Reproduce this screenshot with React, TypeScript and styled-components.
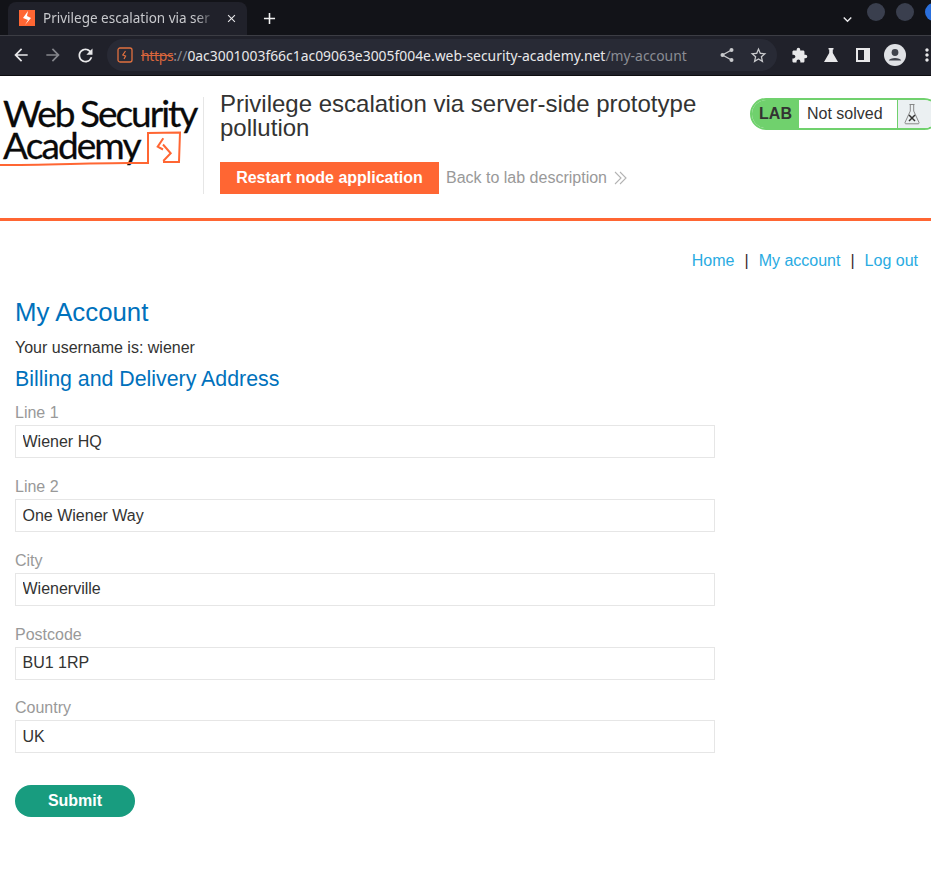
import React from "react";
import styled, { createGlobalStyle } from "styled-components";
import { MdArrowBack, MdArrowForward, MdRefresh, MdOutlineStarBorder, MdExtension, MdClose, MdAdd, MdKeyboardArrowDown, MdMoreVert } from "react-icons/md";

const GlobalStyle = createGlobalStyle`
  html, body {
    margin: 0;
    padding: 0;
    background: #fff;
    overflow: hidden;
  }
  body {
    font-family: "Liberation Sans", Arial, sans-serif;
    color: #333332;
  }
  * { box-sizing: border-box; }
`;

const Page = styled.div`
  width: 931px;
  height: 877px;
  overflow: hidden;
`;

/* browser chrome */
const TabStrip = styled.div`
  height: 35px;
  background: #121318;
  display: flex;
  align-items: flex-end;
  padding-left: 8px;
`;

const Tab = styled.div`
  width: 239px;
  height: 33px;
  background: #20212a;
  border-radius: 8px 8px 0 0;
  display: flex;
  align-items: center;
  padding: 0 9px 1px 11px;
  gap: 8px;
  color: #c8c9cd;
  font-family: "Noto Sans", sans-serif;
  font-size: 13.5px;
`;

const TabTitle = styled.span`
  flex: 1;
  white-space: nowrap;
  -webkit-mask-image: linear-gradient(to right, #000 88%, transparent 99%);
  mask-image: linear-gradient(to right, #000 88%, transparent 99%);
`;

const NewTab = styled.div`
  color: #f2f2f2;
  display: flex;
  margin-left: 13px;
  height: 33px;
  align-items: center;
`;

const WindowControls = styled.div`
  margin-left: auto;
  height: 35px;
  display: flex;
  align-items: flex-start;
  gap: 11px;
  padding-top: 3px;
  margin-right: -12px;
`;

const WindowDot = styled.span<{ $blue?: boolean }>`
  width: 18px;
  height: 18px;
  border-radius: 50%;
  background: ${(p) => (p.$blue ? "#2a6fdc" : "#3a3f4e")};
`;

const Toolbar = styled.div`
  height: 41px;
  background: #20212a;
  border-top: 1px solid #3c3d44;
  border-bottom: 1px solid #0d0d10;
  display: flex;
  align-items: center;
  padding: 0 0 1px 11px;
  color: #e8e8ea;
`;

const NavIcon = styled.span<{ $dim?: boolean }>`
  display: flex;
  width: 32px;
  flex-shrink: 0;
  color: ${(p) => (p.$dim ? "#85868c" : "#e8e8ea")};
`;

const Omnibox = styled.div`
  width: 670px;
  height: 32px;
  flex-shrink: 0;
  background: #282a35;
  border-radius: 16px;
  display: flex;
  align-items: center;
  padding-left: 10px;
  font-family: "Noto Sans", sans-serif;
  font-size: 13.9px;
  white-space: nowrap;
`;

const Https = styled.span`
  color: #d9663c;
  text-decoration: line-through;
  letter-spacing: -0.3px;
`;

const Slashes = styled.span`
  color: #8b8d94;
`;

const Host = styled.span`
  color: #e8e8ea;
`;

const UrlPath = styled.span`
  color: #8b8d94;
`;

const OmniActions = styled.div`
  margin-left: auto;
  display: flex;
  align-items: center;
  gap: 14px;
  padding-right: 9px;
  color: #c9cacd;
`;

const ToolIcons = styled.div`
  display: flex;
  align-items: center;
  margin-left: 6px;
  color: #e8e8ea;
  flex-shrink: 0;
`;

const ToolButton = styled.span`
  width: 32px;
  display: flex;
  justify-content: center;
`;

/* lab header */
const LabHeader = styled.header`
  height: 145px;
  border-bottom: 3px solid #ff6633;
  display: flex;
  align-items: flex-start;
  padding: 21px 0 0 3px;
`;

const LogoBlock = styled.div`
  width: 201px;
  height: 97px;
  flex-shrink: 0;
  border-right: 1px solid #e6e6e6;
`;

const LabMain = styled.div`
  width: 546px;
  flex-shrink: 0;
  padding: 0 30px 0 16px;
  margin-top: -5px;
`;

const LabTitle = styled.h2`
  margin: 0;
  font-weight: 400;
  font-size: 24px;
  line-height: 24px;
  color: #333332;
`;

const LabActions = styled.div`
  display: flex;
  align-items: center;
  margin-top: 22px;
  gap: 7px;
`;

const RestartButton = styled.a`
  background: #ff6633;
  color: #fff;
  font-weight: 700;
  font-size: 16px;
  height: 32px;
  width: 219px;
  display: flex;
  align-items: center;
  justify-content: center;
`;

const BackLink = styled.a`
  color: #999;
  font-size: 16px;
  display: flex;
  align-items: center;
  gap: 7px;
`;

const LabBadge = styled.div`
  display: flex;
  width: 190px;
  height: 32px;
  flex-shrink: 0;
  border: 2px solid #70d16d;
  border-radius: 16px;
  overflow: hidden;
  margin-top: 1px;
`;

const BadgeLabel = styled.span`
  background: #70d16d;
  width: 47px;
  display: flex;
  align-items: center;
  justify-content: center;
  font-weight: 700;
  font-size: 16px;
  color: #333332;
`;

const BadgeStatus = styled.span`
  width: 98px;
  padding-left: 8px;
  display: flex;
  align-items: center;
  font-size: 16px;
  color: #333332;
  background: #fff;
`;

const BadgeIcon = styled.span`
  flex: 1;
  border-left: 1px solid #70d16d;
  background: #ebf0f2;
  padding-left: 6px;
  display: flex;
  align-items: center;
`;

/* page content */
const Content = styled.main`
  padding: 0 15px;
`;

const TopLinks = styled.nav`
  display: flex;
  justify-content: flex-end;
  align-items: center;
  gap: 10px;
  font-size: 16px;
  height: 18px;
  margin: 31px -2px 0 0;
`;

const TopLink = styled.a`
  color: #29abe2;
`;

const Divider = styled.span`
  color: #3a2a2a;
`;

const Heading = styled.h1`
  margin: 27px 0 0;
  font-size: 25.8px;
  line-height: 30px;
  font-weight: 400;
  color: #0071bc;
`;

const Username = styled.p`
  margin: 12px 0 0;
  font-size: 16px;
  line-height: 18px;
`;

const SubHeading = styled.h2`
  margin: 10px 0 0;
  font-size: 21.33px;
  line-height: 25px;
  font-weight: 400;
  color: #0071bc;
`;

const AddressForm = styled.form`
  display: flex;
  flex-direction: column;
  margin-top: 12.3px;
`;

const Field = styled.label`
  display: flex;
  flex-direction: column;
  height: 73.75px;
  font-size: 16px;
  color: #999;
`;

const FieldName = styled.span`
  line-height: 18px;
  height: 21px;
`;

const TextInput = styled.input`
  width: 700px;
  height: 33px;
  border: 1px solid #e6e6e6;
  padding: 0 6.5px;
  font: 16px "Liberation Sans", Arial, sans-serif;
  color: #333332;
  background: #fff;
  outline: none;
`;

const SubmitButton = styled.button`
  width: 120px;
  height: 32px;
  margin-top: 12px;
  border: 0;
  border-radius: 16px;
  background: #189c7f;
  color: #fff;
  font: 700 16px "Liberation Sans", Arial, sans-serif;
`;

const LogoMark = () => (
  <svg width="200" height="78" viewBox="0 0 200 78" style={{ display: "block", overflow: "visible" }}>
    <text x="0" y="30" fontFamily="Lato, sans-serif" fontSize="37" fill="#0a0a0a" stroke="#0a0a0a" strokeWidth="0.3" letterSpacing="-2" wordSpacing="-1">
      Web Security
    </text>
    <text x="0" y="62" fontFamily="Lato, sans-serif" fontSize="37" fill="#0a0a0a" stroke="#0a0a0a" strokeWidth="0.3" letterSpacing="-1.9">
      Academy
    </text>
    <path d="M-3 68 C40 68 90 66 125 66 L145 66 L145 36 L177 35.5 L176 65 L160 65" fill="none" stroke="#ff6633" strokeWidth="2" />
    <path d="M160.3 41.3 L154.7 49.7 L160 52.5 M160 47.5 L167.7 56.3 L160.3 64" fill="none" stroke="#ff6633" strokeWidth="2" />
  </svg>
);

const fields = [
  { name: "Line 1", value: "Wiener HQ" },
  { name: "Line 2", value: "One Wiener Way" },
  { name: "City", value: "Wienerville" },
  { name: "Postcode", value: "BU1 1RP" },
  { name: "Country", value: "UK" },
];

function App() {
  return (
    <Page>
      <GlobalStyle />
      <TabStrip>
        <Tab>
          <svg width="16" height="16" viewBox="0 0 16 16">
            <rect width="16" height="16" fill="#ff6633" />
            <path d="M9 1 L4 8 L9 10 L6 15 L12 8 L8 6 Z" fill="#fff" />
          </svg>
          <TabTitle>Privilege escalation via ser</TabTitle>
          <MdClose size={13} color="#e8e8ea" />
        </Tab>
        <NewTab>
          <MdAdd size={19} />
        </NewTab>
        <WindowControls>
          <MdKeyboardArrowDown size={17} color="#e8e8ea" style={{ marginTop: 8 }} />
          <WindowDot />
          <WindowDot />
          <WindowDot $blue />
        </WindowControls>
      </TabStrip>
      <Toolbar>
        <NavIcon><MdArrowBack size={20} /></NavIcon>
        <NavIcon $dim><MdArrowForward size={20} /></NavIcon>
        <NavIcon><MdRefresh size={21} /></NavIcon>
        <Omnibox>
          <svg width="16" height="16" viewBox="0 0 16 16" style={{ marginRight: 8, flexShrink: 0 }}>
            <rect x="1" y="1" width="14" height="14" rx="2" fill="none" stroke="#e0703f" strokeWidth="1.3" />
            <path d="M8.5 4 L5.8 8 L8.6 9 L7 12" fill="none" stroke="#e0703f" strokeWidth="1.2" />
          </svg>
          <Https>https</Https>
          <Slashes>://</Slashes>
          <Host>0ac3001003f66c1ac09063e3005f004e.web-security-academy.net</Host>
          <UrlPath>/my-account</UrlPath>
          <OmniActions>
            <svg width="16" height="16" viewBox="0 0 16 16">
              <path d="M12.5 3 L3.5 8 L12.5 13" fill="none" stroke="currentColor" strokeWidth="1.3" />
              <circle cx="12.5" cy="3" r="2" fill="currentColor" />
              <circle cx="3.5" cy="8" r="2" fill="currentColor" />
              <circle cx="12.5" cy="13" r="2" fill="currentColor" />
            </svg>
            <MdOutlineStarBorder size={19} />
          </OmniActions>
        </Omnibox>
        <ToolIcons>
          <ToolButton><MdExtension size={17} /></ToolButton>
          <ToolButton>
            <svg width="16" height="16" viewBox="0 0 16 16">
              <path d="M5.5 1 H10.5 V2.5 H9.8 V6 L15 15 H1 L6.2 6 V2.5 H5.5 Z" fill="currentColor" />
            </svg>
          </ToolButton>
          <ToolButton>
            <svg width="16" height="16" viewBox="0 0 16 16">
              <rect x="2" y="2" width="12" height="12" fill="none" stroke="currentColor" strokeWidth="2" />
              <rect x="9" y="2" width="5" height="12" fill="currentColor" />
            </svg>
          </ToolButton>
          <ToolButton>
            <svg width="22" height="22" viewBox="0 0 22 22">
              <circle cx="11" cy="11" r="11" fill="#dfe1e5" />
              <circle cx="11" cy="8.5" r="3.4" fill="#40434c" />
              <path d="M4.8 16.5 C5.5 13 16.5 13 17.2 16.5 Z" fill="#40434c" />
            </svg>
          </ToolButton>
          <ToolButton><MdMoreVert size={20} /></ToolButton>
        </ToolIcons>
      </Toolbar>

      <LabHeader>
        <LogoBlock>
          <LogoMark />
        </LogoBlock>
        <LabMain>
          <LabTitle>Privilege escalation via server-side prototype pollution</LabTitle>
          <LabActions>
            <RestartButton>Restart node application</RestartButton>
            <BackLink>
              Back to lab description
              <svg width="13" height="14" viewBox="0 0 13 14">
                <path d="M1 1 L7 7 L1 13 M6 1 L12 7 L6 13" fill="none" stroke="#b3b3b3" strokeWidth="1.1" />
              </svg>
            </BackLink>
          </LabActions>
        </LabMain>
        <LabBadge>
          <BadgeLabel>LAB</BadgeLabel>
          <BadgeStatus>Not solved</BadgeStatus>
          <BadgeIcon>
            <svg width="16" height="22" viewBox="0 0 16 22">
              <path d="M5.5 1.5 H10.5 M6.3 1.5 V8 L1 19.5 C0.8 20.3 1.2 20.8 2 20.8 H14 C14.8 20.8 15.2 20.3 15 19.5 L9.7 8 V1.5" fill="none" stroke="#7d7d7d" strokeWidth="0.9" />
              <path d="M5 12 L11 18 M11 12 L5 18" stroke="#333332" strokeWidth="1.5" />
            </svg>
          </BadgeIcon>
        </LabBadge>
      </LabHeader>

      <Content>
        <TopLinks>
          <TopLink>Home</TopLink>
          <Divider>|</Divider>
          <TopLink>My account</TopLink>
          <Divider>|</Divider>
          <TopLink>Log out</TopLink>
        </TopLinks>
        <Heading>My Account</Heading>
        <Username>Your username is: wiener</Username>
        <SubHeading>Billing and Delivery Address</SubHeading>
        <AddressForm onSubmit={(e) => e.preventDefault()}>
          {fields.map((f) => (
            <Field key={f.name}>
              <FieldName>{f.name}</FieldName>
              <TextInput defaultValue={f.value} />
            </Field>
          ))}
          <SubmitButton type="submit">Submit</SubmitButton>
        </AddressForm>
      </Content>
    </Page>
  );
}

export default App;
